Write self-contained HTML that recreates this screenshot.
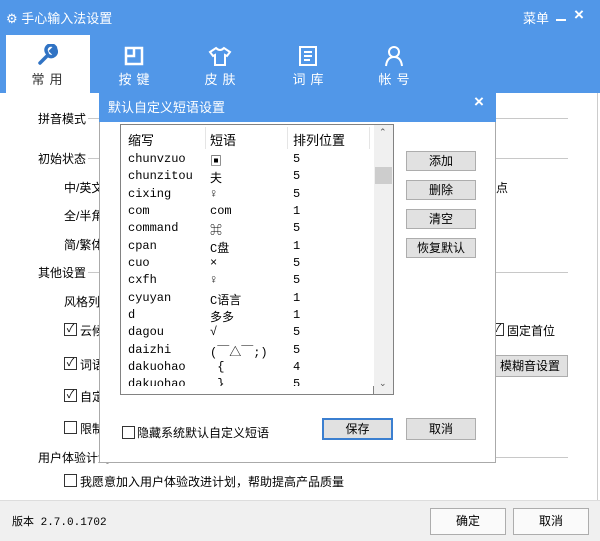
<!DOCTYPE html>
<html><head><meta charset="utf-8"><style>
*{margin:0;padding:0;box-sizing:border-box}
body{width:600px;height:541px;overflow:hidden;background:#fff;font-family:"Liberation Sans","Noto Sans CJK SC",sans-serif;font-size:12px;color:#000;position:relative}
.a{position:absolute;white-space:nowrap}
.top{left:0;top:0;width:600px;height:93px;background:#5197e8}
.tab{position:absolute;top:69px;width:80px;text-align:center;color:#fff;font-size:13px;letter-spacing:5px;text-indent:5px}
.line{position:absolute;height:1px;background:#c8c8c8}
.cb{position:absolute;width:13px;height:13px;border:1px solid #333;background:#fff;font-size:11px;line-height:11px;text-align:center}
.btn{position:absolute;background:#e1e1e1;border:1px solid #adadad;text-align:center;font-size:12px}
.row{position:absolute;left:128px;font-family:"Liberation Mono","Noto Sans CJK SC",monospace;font-size:12px}
</style></head><body>
<div class="a top"></div>
<div class="a" style="left:6px;top:8px;color:#fff;font-size:13px">⚙ 手心输入法设置</div>
<div class="a" style="left:523px;top:8px;color:#fff;font-size:13px">菜单</div>
<div class="a" style="left:556px;top:19px;width:10px;height:2px;background:#fff"></div>
<div class="a" style="left:574px;top:5px;color:#fff;font-size:17px;font-weight:bold">×</div>
<div class="a" style="left:6px;top:35px;width:84px;height:60px;background:#fff"></div>
<svg class="a" style="left:36px;top:44px" width="22" height="22" viewBox="0 0 22 22"><path d="M4 19 L12 11 M11 9 A5 5 0 0 1 19 3 L15 7 L17 9 L20 6 A5 5 0 0 1 13 12" stroke="#3073c4" stroke-width="3.5" fill="none" stroke-linecap="round"/></svg>
<div class="tab" style="left:7px;color:#333">常用</div>
<svg class="a" style="left:124px;top:46px" width="20" height="20"><path d="M2 2h16v16H2z M10 2v8H2" stroke="#fff" stroke-width="2.5" fill="none"/></svg>
<div class="tab" style="left:94px">按键</div>
<svg class="a" style="left:208px;top:46px" width="24" height="20"><path d="M8 2 Q12 6 16 2 L22 6 L19 10 L17 9 V19 H7 V9 L5 10 L2 6 Z" stroke="#fff" stroke-width="2" fill="none"/></svg>
<div class="tab" style="left:180px">皮肤</div>
<svg class="a" style="left:298px;top:45px" width="20" height="22"><path d="M2 2h16v18H2z M6 7h8 M6 11h8 M6 15h6" stroke="#fff" stroke-width="2" fill="none"/></svg>
<div class="tab" style="left:268px">词库</div>
<svg class="a" style="left:384px;top:45px" width="20" height="22"><circle cx="10" cy="7" r="5" stroke="#fff" stroke-width="2" fill="none"/><path d="M2 21 Q3 12 10 12 Q17 12 18 21" stroke="#fff" stroke-width="2" fill="none"/></svg>
<div class="tab" style="left:354px">帐号</div>

<div class="a" style="left:38px;top:110px">拼音模式</div><div class="line" style="left:88px;top:118px;width:480px"></div>
<div class="a" style="left:38px;top:150px">初始状态</div><div class="line" style="left:88px;top:158px;width:480px"></div>
<div class="a" style="left:64px;top:179px">中/英文</div>
<div class="a" style="left:64px;top:207px">全/半角</div>
<div class="a" style="left:64px;top:236px">简/繁体</div>
<div class="a" style="left:38px;top:264px">其他设置</div><div class="line" style="left:88px;top:272px;width:480px"></div>
<div class="a" style="left:64px;top:293px">风格列</div>
<div class="cb" style="left:64px;top:323px">✓</div><div class="a" style="left:80px;top:322px">云候</div>
<div class="cb" style="left:64px;top:357px">✓</div><div class="a" style="left:80px;top:356px">词语</div>
<div class="cb" style="left:64px;top:389px">✓</div><div class="a" style="left:80px;top:388px">自定</div>
<div class="cb" style="left:64px;top:421px"></div><div class="a" style="left:80px;top:420px">限制</div>
<div class="a" style="left:38px;top:449px">用户体验计划</div><div class="line" style="left:112px;top:457px;width:456px"></div>
<div class="cb" style="left:64px;top:474px"></div><div class="a" style="left:80px;top:473px">我愿意加入用户体验改进计划，帮助提高产品质量</div>
<div class="a" style="left:496px;top:179px">点</div>
<div class="cb" style="left:491px;top:323px">✓</div><div class="a" style="left:507px;top:322px">固定首位</div>
<div class="btn" style="left:492px;top:355px;width:76px;height:22px;line-height:20px">模糊音设置</div>
<div class="a" style="left:597px;top:93px;width:1px;height:407px;background:#ccc"></div>

<div class="a" style="left:0;top:500px;width:600px;height:41px;background:#f0f0f0;border-top:1px solid #ddd"></div>
<div class="a" style="left:12px;top:513px;font-family:'Liberation Mono','Noto Sans CJK SC',monospace;font-size:11px">版本 2.7.0.1702</div>
<div class="btn" style="left:430px;top:508px;width:76px;height:27px;line-height:25px;background:#fafafa">确定</div>
<div class="btn" style="left:513px;top:508px;width:76px;height:27px;line-height:25px;background:#fafafa">取消</div>

<div class="a" style="left:99px;top:90px;width:397px;height:373px;background:#fff;border:1px solid #aaa"></div>
<div class="a" style="left:99px;top:90px;width:397px;height:32px;background:#5197e8"></div>
<div class="a" style="left:108px;top:97px;color:#fff;font-size:13px">默认自定义短语设置</div>
<div class="a" style="left:474px;top:92px;color:#fff;font-size:17px;font-weight:bold">×</div>
<div class="a" style="left:120px;top:124px;width:274px;height:271px;border:1px solid #828282;background:#fff"></div>
<div class="a" style="left:374px;top:125px;width:19px;height:269px;background:#f0f0f0"></div>
<div class="a" style="left:375px;top:167px;width:17px;height:17px;background:#cdcdcd"></div>
<div class="a" style="left:379px;top:127px;font-size:9px;color:#555">⌃</div>
<div class="a" style="left:379px;top:378px;font-size:9px;color:#555">⌄</div>
<div class="a" style="left:128px;top:130px;font-size:13px">缩写</div>
<div class="a" style="left:210px;top:130px;font-size:13px">短语</div>
<div class="a" style="left:293px;top:130px;font-size:13px">排列位置</div>
<div class="a" style="left:205px;top:127px;width:1px;height:22px;background:#e5e5e5"></div>
<div class="a" style="left:287px;top:127px;width:1px;height:22px;background:#e5e5e5"></div>
<div class="a" style="left:369px;top:127px;width:1px;height:22px;background:#e5e5e5"></div>
<div class="row" style="top:152px">chunvzuo</div><div class="row" style="left:210px;top:152px">▣</div><div class="row" style="left:293px;top:152px">5</div>
<div class="row" style="top:169px">chunzitou</div><div class="row" style="left:210px;top:169px">夫</div><div class="row" style="left:293px;top:169px">5</div>
<div class="row" style="top:187px">cixing</div><div class="row" style="left:210px;top:187px">♀</div><div class="row" style="left:293px;top:187px">5</div>
<div class="row" style="top:204px">com</div><div class="row" style="left:210px;top:204px">com</div><div class="row" style="left:293px;top:204px">1</div>
<div class="row" style="top:221px">command</div><div class="row" style="left:210px;top:221px">⌘</div><div class="row" style="left:293px;top:221px">5</div>
<div class="row" style="top:239px">cpan</div><div class="row" style="left:210px;top:239px">C盘</div><div class="row" style="left:293px;top:239px">1</div>
<div class="row" style="top:256px">cuo</div><div class="row" style="left:210px;top:256px">×</div><div class="row" style="left:293px;top:256px">5</div>
<div class="row" style="top:273px">cxfh</div><div class="row" style="left:210px;top:273px">♀</div><div class="row" style="left:293px;top:273px">5</div>
<div class="row" style="top:291px">cyuyan</div><div class="row" style="left:210px;top:291px">C语言</div><div class="row" style="left:293px;top:291px">1</div>
<div class="row" style="top:308px">d</div><div class="row" style="left:210px;top:308px">多多</div><div class="row" style="left:293px;top:308px">1</div>
<div class="row" style="top:325px">dagou</div><div class="row" style="left:210px;top:325px">√</div><div class="row" style="left:293px;top:325px">5</div>
<div class="row" style="top:343px">daizhi</div><div class="row" style="left:210px;top:343px">(￣△￣;)</div><div class="row" style="left:293px;top:343px">5</div>
<div class="row" style="top:360px">dakuohao</div><div class="row" style="left:210px;top:360px">&nbsp;{</div><div class="row" style="left:293px;top:360px">4</div>
<div class="row" style="top:377px">dakuohao</div><div class="row" style="left:210px;top:377px">&nbsp;}</div><div class="row" style="left:293px;top:377px">5</div>
<div class="a" style="left:120px;top:386px;width:254px;height:9px;background:#fff;border:1px solid #828282;border-top:none;z-index:3"></div>
<div class="btn" style="left:406px;top:151px;width:70px;height:20px;line-height:18px">添加</div>
<div class="btn" style="left:406px;top:180px;width:70px;height:20px;line-height:18px">删除</div>
<div class="btn" style="left:406px;top:209px;width:70px;height:20px;line-height:18px">清空</div>
<div class="btn" style="left:406px;top:238px;width:70px;height:20px;line-height:18px">恢复默认</div>
<div class="cb" style="left:122px;top:426px"></div><div class="a" style="left:137px;top:424px">隐藏系统默认自定义短语</div>
<div class="btn" style="left:322px;top:418px;width:71px;height:22px;line-height:19px;border:2px solid #3b7fd0">保存</div>
<div class="btn" style="left:406px;top:418px;width:70px;height:22px;line-height:20px">取消</div>
</body></html>
